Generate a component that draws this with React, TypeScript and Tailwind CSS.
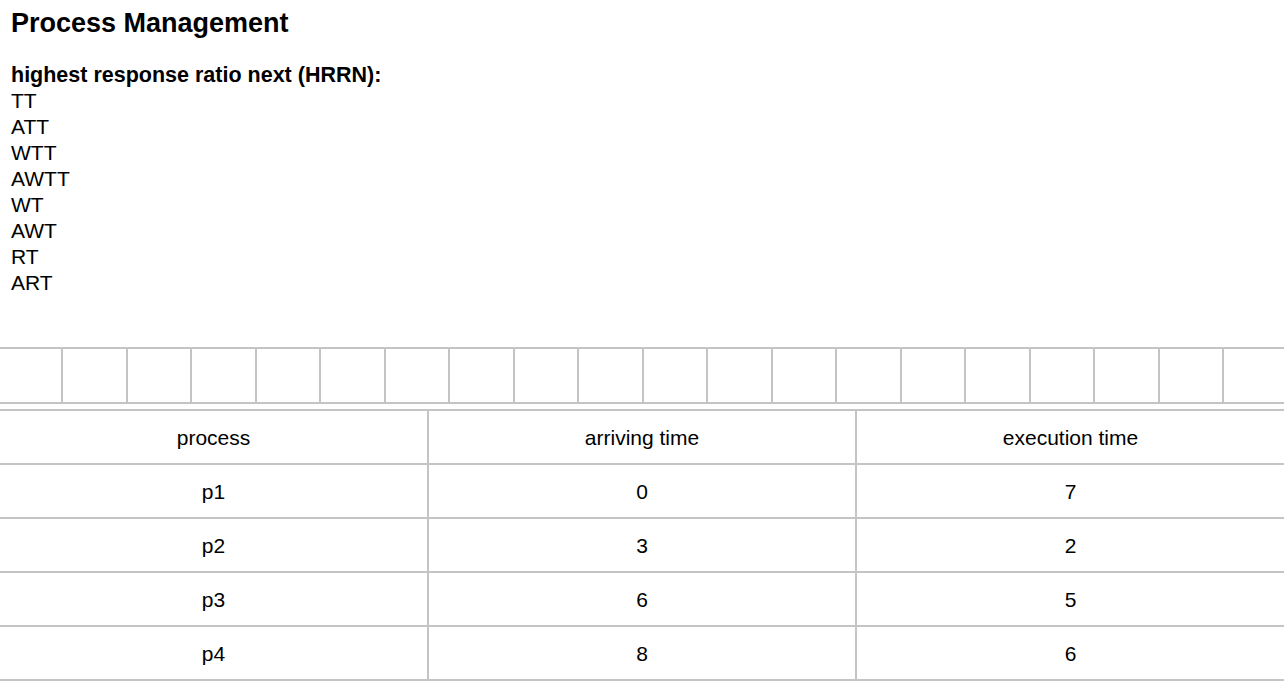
const metrics = ["TT", "ATT", "WTT", "AWTT", "WT", "AWT", "RT", "ART"];

const rows = [
  { name: "p1", arrive: 0, exec: 7 },
  { name: "p2", arrive: 3, exec: 2 },
  { name: "p3", arrive: 6, exec: 5 },
  { name: "p4", arrive: 8, exec: 6 },
];

const slots = Array.from({ length: 20 }, (_, i) => i);

export default function App() {
  return (
    <div className="min-h-[687px] w-[1284px] bg-white font-['Liberation_Sans',Arial,sans-serif] text-black">
      <div className="px-[11px] pt-[7px]">
        <h1 className="text-[27px] font-bold leading-[32px]">Process Management</h1>
        <p className="mt-[23px] text-[21.5px] font-bold leading-[26px]">
          highest response ratio next (HRRN):
        </p>
        <div className="text-[21px] leading-[26px]">
          {metrics.map((m) => (
            <div key={m}>{m}</div>
          ))}
        </div>
      </div>

      {/* gantt strip */}
      <div className="mt-[51px] grid h-[57px] grid-cols-[63px_repeat(18,64.5px)_1fr] border-y-2 border-[#c4c4c4]">
        {slots.map((i) => (
          <div key={i} className={i < 19 ? "border-r-2 border-[#c4c4c4]" : ""} />
        ))}
      </div>

      <table className="mt-[5px] w-full border-collapse text-center text-[21px] leading-none">
        <thead>
          <tr className="h-[54px] border-y-2 border-[#c4c4c4]">
            <th className="w-1/3 font-normal">process</th>
            <th className="w-1/3 border-x-2 border-[#c4c4c4] font-normal">arriving time</th>
            <th className="w-1/3 font-normal">execution time</th>
          </tr>
        </thead>
        <tbody>
          {rows.map((r) => (
            <tr key={r.name} className="h-[54px] border-b-2 border-[#c4c4c4]">
              <td>{r.name}</td>
              <td className="border-x-2 border-[#c4c4c4]">{r.arrive}</td>
              <td>{r.exec}</td>
            </tr>
          ))}
        </tbody>
      </table>
    </div>
  );
}
